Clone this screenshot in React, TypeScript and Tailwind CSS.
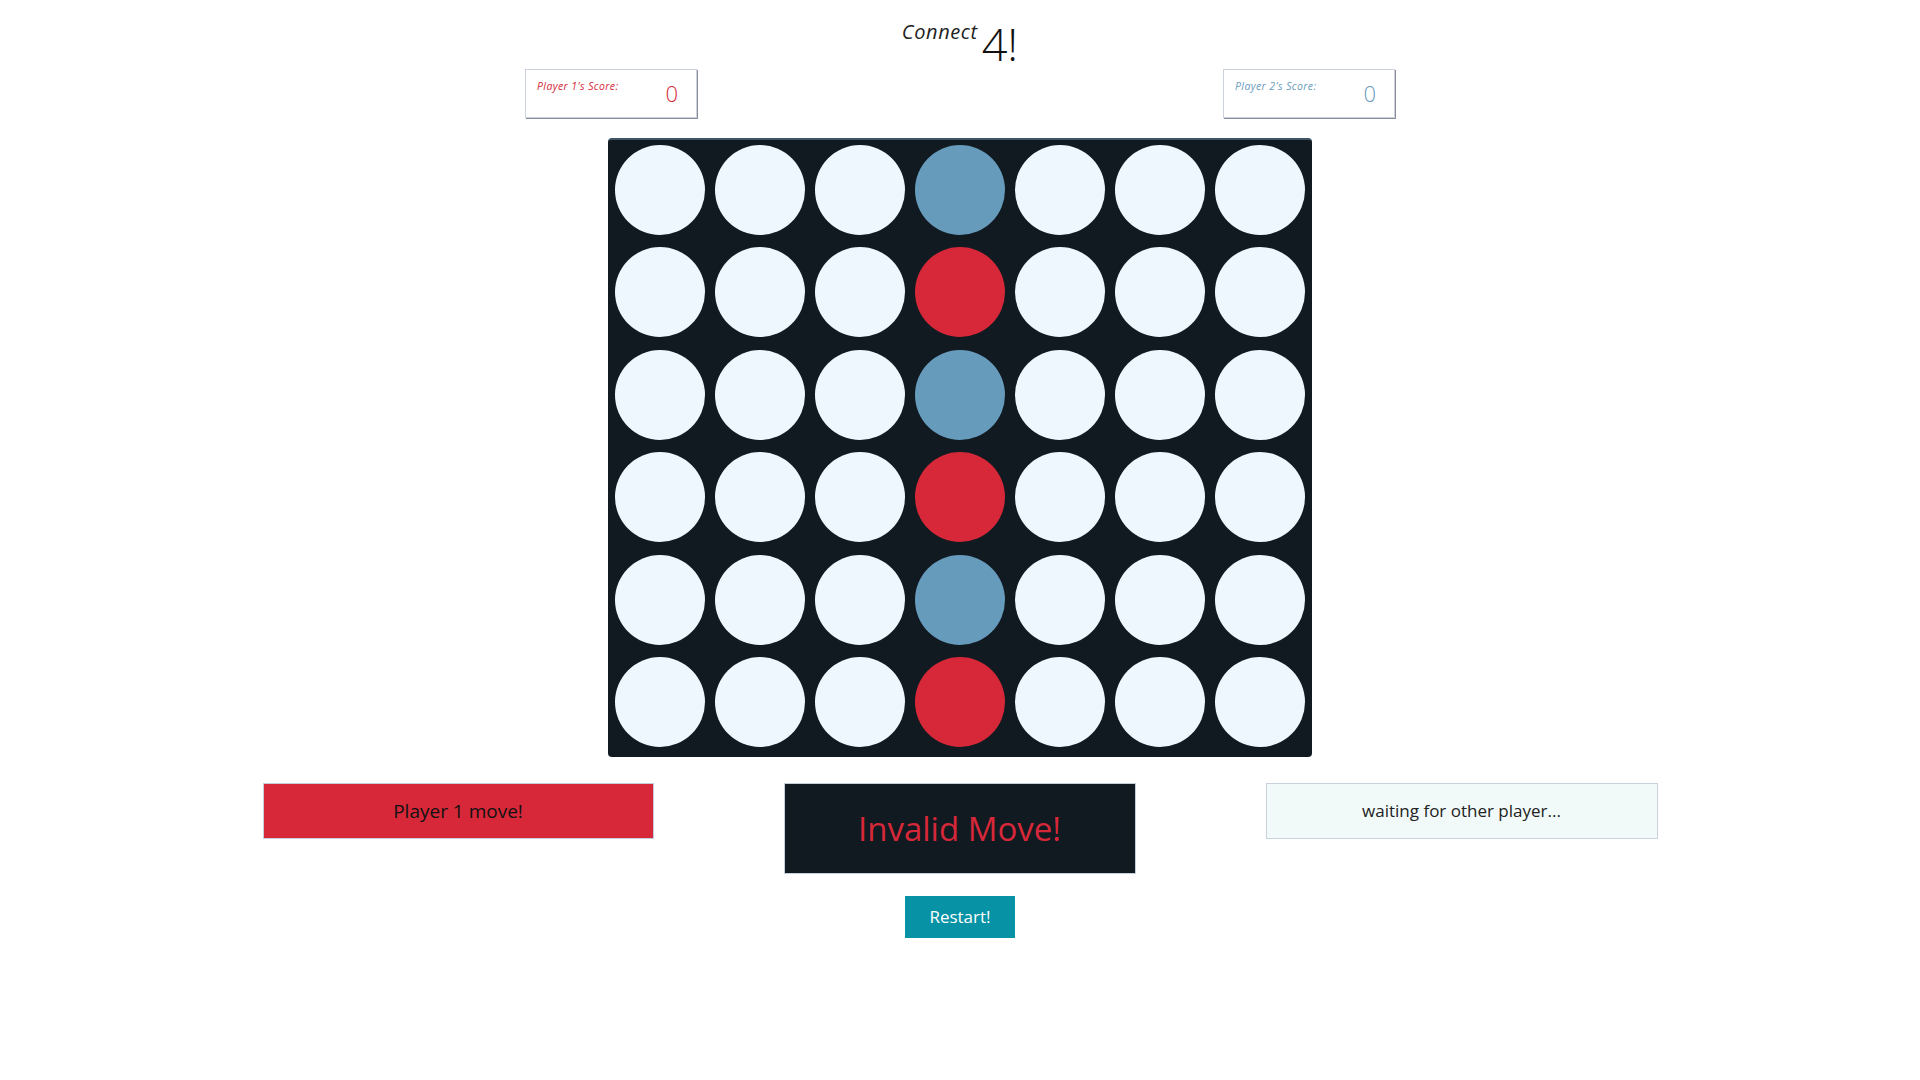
import React from "react";

type Cell = 0 | 1 | 2;

const board: Cell[][] = [
  [0, 0, 0, 2, 0, 0, 0],
  [0, 0, 0, 1, 0, 0, 0],
  [0, 0, 0, 2, 0, 0, 0],
  [0, 0, 0, 1, 0, 0, 0],
  [0, 0, 0, 2, 0, 0, 0],
  [0, 0, 0, 1, 0, 0, 0],
];

const font = { fontFamily: '"Open Sans", "Noto Sans", sans-serif' };

const ScoreBox = ({ label, score, color }: { label: string; score: number; color: string }) => (
  <div className="w-[172px] h-[49px] bg-white border border-[#cbd2dd] shadow-[1px_1px_0_#8b8d98] flex items-start justify-between pl-[11px] pr-[18px]">
    <span className={`text-[10.5px] italic tracking-[0.4px] mt-[9px] ${color}`}>{label}</span>
    <span className={`text-[22px] font-light leading-none mt-[12px] ${color}`}>{score}</span>
  </div>
);

export default function App() {
  return (
    <div className="bg-white min-h-screen w-full text-[#111] flex flex-col items-center" style={font}>
      {/* Title */}
      <div className="flex items-start mt-[17px] h-[45px]">
        <span className="italic text-[20px] tracking-[0.6px] leading-none mt-[5px] text-[#222]">Connect</span>
        <span className="text-[45px] font-light leading-none mt-[4px] ml-[4px]">4!</span>
      </div>

      {/* Scores */}
      <div className="flex gap-[526px] mt-[7px]">
        <ScoreBox label="Player 1's Score:" score={0} color="text-[#d62839]" />
        <ScoreBox label="Player 2's Score:" score={0} color="text-[#6a9bbd]" />
      </div>

      {/* Board */}
      <div className="mt-[20px] w-[704px] h-[619px] bg-[#111a21] rounded-[4px] border-t-2 border-[#3e5566] pt-[5px] px-[7px] pb-[10px] grid grid-cols-7 gap-x-[10px] gap-y-[12.4px]">
        {board.flat().map((c, i) => (
          <div
            key={i}
            className={
              "w-[90px] h-[90px] rounded-full " +
              (c === 1 ? "bg-[#d62839]" : c === 2 ? "bg-[#669bbc]" : "bg-[#eff7fe]")
            }
          />
        ))}
      </div>

      {/* Status row */}
      <div className="flex items-start gap-[130px] mt-[26px]">
        <div className="w-[391px] h-[56px] bg-[#d62839] border border-[#c5cfdc] flex items-center justify-center text-[19px] text-[#111]">
          Player 1 move!
        </div>
        <div className="w-[352px] h-[91px] bg-[#111a21] border border-[#c5cfdc] flex items-center justify-center text-[33px] text-[#d62839]">
          Invalid Move!
        </div>
        <div className="w-[392px] h-[56px] bg-[#f1faf9] border border-[#c9d1dc] flex items-center justify-center text-[17px] text-[#222]">
          waiting for other player...
        </div>
      </div>

      <button className="mt-[22px] w-[110px] h-[42px] bg-[#0892a5] text-white text-[17px] flex items-center justify-center">
        Restart!
      </button>
    </div>
  );
}
